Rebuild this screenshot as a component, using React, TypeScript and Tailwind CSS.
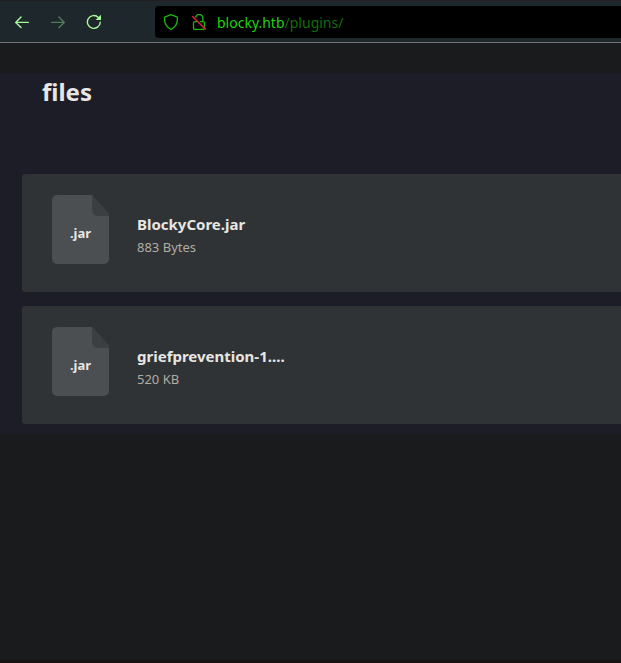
const files = [
  { name: 'BlockyCore.jar', size: '883 Bytes' },
  { name: 'griefprevention-1....', size: '520 KB' },
];

function FileIcon() {
  return (
    <div className="relative h-[69px] w-[57px] shrink-0">
      <svg className="block" width="57" height="69" viewBox="0 0 57 69">
        <path d="M5 0H40L57 19V64a5 5 0 0 1-5 5H5a5 5 0 0 1-5-5V5a5 5 0 0 1 5-5Z" fill="#4b4f52" />
        <path d="M40 0L57 19V21H46a6 6 0 0 1-6-6Z" fill="#3b3f41" />
      </svg>
      <span className="absolute inset-x-0 top-[29px] text-center text-[13px] leading-[18px] font-bold">.jar</span>
    </div>
  );
}

function Toolbar() {
  return (
    <header className="flex h-[43px] items-start border-t border-b border-t-[#231f20] border-b-[#707577] bg-[#1d272c] pt-[5px]">
      <div className="flex h-8 w-[155px] shrink-0 items-center gap-5 pl-3.5">
        <svg width="16" height="16" viewBox="0 0 16 16" fill="none" stroke="#a6fb9b" strokeWidth="1.4" strokeLinecap="round" strokeLinejoin="round">
          <path d="M14.3 8.4H2M7 3L1.7 8.4L7 13.6" />
        </svg>
        <svg width="16" height="16" viewBox="0 0 16 16" fill="none" stroke="#527b57" strokeWidth="1.4" strokeLinecap="round" strokeLinejoin="round">
          <path d="M1.7 8.4H14M9 3l5.3 5.4L9 13.6" />
        </svg>
        <svg width="16" height="16" viewBox="0 0 16 16" fill="none" stroke="#a6fb9b" strokeWidth="1.4" strokeLinecap="round">
          <path d="M12.4 3.5A6.4 6.4 0 1 0 14.2 8.2" />
          <path d="M15 .8V6H9.6Z" fill="#a6fb9b" stroke="none" />
        </svg>
      </div>
      <div className="flex h-8 flex-1 items-center rounded-l bg-black pl-2 font-['Noto_Sans',sans-serif] text-sm">
        <svg width="16" height="16" viewBox="0 0 16 16" fill="none" stroke="#17b80d" strokeWidth="1.3" strokeLinejoin="round">
          <path d="M8 .7L14.3 3.2Q15.2 12 8 15.3Q.8 12 1.7 3.2Z" />
        </svg>
        <svg className="ml-3" width="16" height="16" viewBox="0 0 16 16" fill="none" strokeWidth="1.3">
          <path d="M6 7.6H4a1.5 1.5 0 0 0-1.5 1.5v4.8A1.5 1.5 0 0 0 4 15.4h8a1.5 1.5 0 0 0 1.5-1.5V9.1A1.5 1.5 0 0 0 12 7.6H8.8" stroke="#17b80d" />
          <path d="M4.6 3.6a3.6 3.6 0 0 1 7.2 1V7.6" stroke="#17b80d" />
          <path d="M1.2 2.2L14.8 15.6" stroke="#e0203c" strokeWidth="1.5" />
        </svg>
        <span className="ml-2.5 pt-0.5 text-[#1ed30c]">blocky.htb</span>
        <span className="pt-0.5 text-[#126d0b]">/plugins/</span>
      </div>
    </header>
  );
}

export default function App() {
  return (
    <div className="h-[663px] w-full overflow-hidden border-b-[3px] border-[#191314] bg-[#1a1b1c] font-['Noto_Sans',sans-serif] text-[#e8e6e3]">
      <Toolbar />
      <main className="mt-[30px] h-[361px] bg-[#1d1d27] pl-[22px]">
        <h1 className="h-[101px] pt-0.5 pl-5 text-2xl leading-[33px] font-bold">files</h1>
        <ul className="flex flex-col gap-3.5">
          {files.map((file) => (
            <li key={file.name} className="flex h-[118px] rounded-l-[3px] bg-[#2f3335] pt-[21px] pl-[30px]">
              <FileIcon />
              <div className="ml-7 pt-[18px]">
                <div className="text-[15px] leading-[22px] font-bold">{file.name}</div>
                <div className="mt-px text-[13px] leading-[22px] text-[#b2aca2]">{file.size}</div>
              </div>
            </li>
          ))}
        </ul>
      </main>
    </div>
  );
}
